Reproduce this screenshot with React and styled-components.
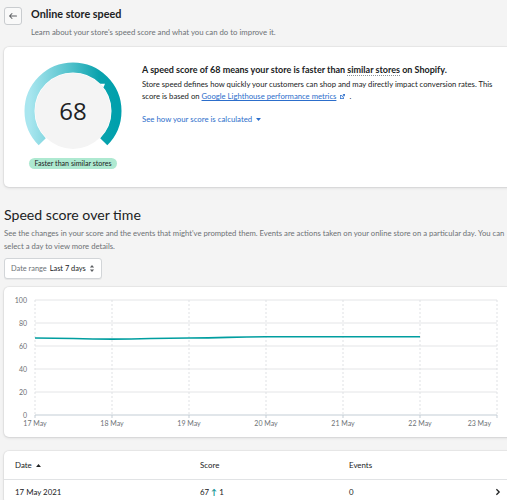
import React from "react";
import styled, { createGlobalStyle } from "styled-components";

const GlobalStyle = createGlobalStyle`
  html, body {
    margin: 0;
    padding: 0;
    background: #f4f4f4;
    overflow: hidden;
  }
  body {
    font-family: Lato, "Open Sans", sans-serif;
    color: #202223;
  }
`;

const Page = styled.div`
  width: 520px;
  padding: 7px 0 0 4px;
`;

const Header = styled.div`
  display: flex;
  align-items: flex-start;
  gap: 9px;
`;

const BackButton = styled.button`
  width: 18px;
  height: 18px;
  padding: 0;
  border: 1px solid #c9cccf;
  border-radius: 3px;
  background: #f9f9f9;
  display: flex;
  align-items: center;
  justify-content: center;
  color: #5c5f62;
  cursor: pointer;
`;

const Title = styled.h1`
  margin: 0;
  font-size: 10.8px;
  line-height: 14px;
  font-weight: 700;
`;

const Subtitle = styled.p`
  margin: 5px 0 0;
  font-size: 7.8px;
  line-height: 12px;
  color: #6d7175;
`;

const Card = styled.div`
  background: #fff;
  border-radius: 5px;
  box-shadow: 0 0 0 1px rgba(63, 63, 68, 0.05), 0 1px 3px rgba(63, 63, 68, 0.15);
  margin-top: ${(p) => p.$mt || 0}px;
`;

const ScoreCard = styled(Card)`
  display: flex;
  gap: 19px;
  padding: 14px 0 18px 19px;
`;

const GaugeColumn = styled.div`
  display: flex;
  flex-direction: column;
  align-items: center;
  width: 100px;
`;

const Badge = styled.span`
  margin-top: 2px;
  background: #aee9d1;
  border-radius: 10px;
  padding: 0 5px;
  font-size: 7.1px;
  line-height: 11px;
  white-space: nowrap;
`;

const ScoreText = styled.div`
  margin-top: 3px;
  width: 362px;
`;

const ScoreHeading = styled.p`
  margin: 0;
  font-size: 9px;
  line-height: 12px;
  font-weight: 700;
`;

const Dotted = styled.span`
  border-bottom: 1px dotted #8c9196;
`;

const Body = styled.p`
  margin: 2px 0 0;
  font-size: 7.7px;
  line-height: 12px;
  color: #202223;
`;

const Link = styled.a`
  color: #2c6ecb;
  text-decoration: underline;
`;

const ExternalIcon = styled.svg`
  margin: 0 3px 0 3px;
  vertical-align: -1px;
`;

const Disclosure = styled.div`
  margin-top: 11px;
  font-size: 7.8px;
  line-height: 12px;
  color: #2c6ecb;
  display: flex;
  align-items: center;
  gap: 3px;
`;

const SectionTitle = styled.h2`
  margin: 18px 0 0;
  font-size: 14.1px;
  line-height: 20px;
  font-weight: 400;
`;

const SectionText = styled.p`
  margin: 2px 0 0;
  font-size: 7.7px;
  line-height: 13px;
  color: #6d7175;
  width: 503px;
`;

const SelectButton = styled.button`
  margin-top: 5px;
  height: 21px;
  padding: 0 6px;
  display: flex;
  align-items: center;
  gap: 3px;
  background: #fff;
  border: 1px solid #d2d5d8;
  border-radius: 3px;
  box-shadow: 0 1px 0 rgba(0, 0, 0, 0.05);
  font-family: inherit;
  font-size: 7.4px;
  color: #202223;
  white-space: nowrap;
`;

const Muted = styled.span`
  color: #6d7175;
`;

const ChartCard = styled(Card)`
  height: 150px;
`;

const TableRow = styled.div`
  display: grid;
  grid-template-columns: 185px 149px 1fr 30px;
  align-items: center;
  height: ${(p) => p.$h}px;
  padding-left: 11px;
  font-size: 7.9px;
  border-top: ${(p) => (p.$divider ? "1px solid #e1e3e5" : "none")};
`;

const SortLabel = styled.span`
  display: flex;
  align-items: center;
  gap: 3px;
`;

const Up = styled.span`
  color: #008c8c;
  font-weight: 700;
`;

function Gauge({ score }) {
  const cx = 50;
  const cy = 50;
  const r = 43.5;
  const pt = (deg, rad) => {
    const a = ((deg - 90) * Math.PI) / 180;
    return [cx + rad * Math.cos(a), cy + rad * Math.sin(a)];
  };
  const [sx, sy] = pt(225, r);
  const [ex, ey] = pt(135, r);
  const tip = 225 + (score / 100) * 270;
  const [b1x, b1y] = pt(tip - 4, 38.2);
  const [b2x, b2y] = pt(tip + 4, 38.2);
  const [tx, ty] = pt(tip + 1, 42);
  return (
    <svg width="100" height="95" viewBox="0 0 100 95">
      <defs>
        <linearGradient id="ring" x1="0" y1="0" x2="1" y2="0">
          <stop offset="0" stopColor="#a9e6ef" />
          <stop offset="0.45" stopColor="#55c3cd" />
          <stop offset="0.8" stopColor="#0aa2ad" />
          <stop offset="1" stopColor="#00a0ac" />
        </linearGradient>
      </defs>
      <path
        d={`M ${sx} ${sy} A ${r} ${r} 0 1 1 ${ex} ${ey}`}
        fill="none"
        stroke="url(#ring)"
        strokeWidth="10"
      />
      <circle cx={cx} cy={cy} r="38" fill="#f4f4f4" />
      <path d={`M ${b1x} ${b1y} L ${tx} ${ty} L ${b2x} ${b2y} Z`} fill="#ffffff" />
      <text
        x={cx}
        y={cy + 8.5}
        textAnchor="middle"
        fontSize="24"
        fontFamily="Open Sans, sans-serif"
        fill="#202223"
      >
        {score}
      </text>
    </svg>
  );
}

const days = ["17 May", "18 May", "19 May", "20 May", "21 May", "22 May", "23 May"];
const scores = [67, 66, 67, 68, 68, 68];

function Chart() {
  const left = 31;
  const step = 77;
  const top = 13;
  const bottom = 128;
  const yFor = (v) => bottom - (v / 100) * (bottom - top);
  const pts = scores.map((s, i) => [left + i * step, yFor(s)]);
  let d = `M ${pts[0][0]} ${pts[0][1]}`;
  for (let i = 1; i < pts.length; i++) {
    const [x0, y0] = pts[i - 1];
    const [x1, y1] = pts[i];
    const mx = (x0 + x1) / 2;
    d += ` C ${mx} ${y0} ${mx} ${y1} ${x1} ${y1}`;
  }
  return (
    <svg width="510" height="150" viewBox="0 0 510 150" fontFamily="Lato, sans-serif">
      {[0, 20, 40, 60, 80, 100].map((v) => (
        <g key={v}>
          {v > 0 && (
            <line x1={left} x2={left + 6 * step} y1={yFor(v)} y2={yFor(v)} stroke="#e4e5e7" strokeWidth="1" />
          )}
          <text x="23" y={yFor(v) + 2.5} textAnchor="end" fontSize="7" fill="#6d7175">
            {v}
          </text>
        </g>
      ))}
      {days.map((dname, i) => {
        const x = left + i * step;
        const last = i === days.length - 1;
        return (
          <g key={dname}>
            <line x1={x} x2={x} y1={top} y2={bottom} stroke="#dfe1e4" strokeDasharray="2 2" />
            <line x1={x} x2={x} y1={bottom} y2={bottom + 3} stroke="#c4cdd5" />
            <text x={last ? x - 6 : x} y="139" textAnchor={last ? "end" : "middle"} fontSize="7" fill="#6d7175">
              {dname}
            </text>
          </g>
        );
      })}
      <line x1={left} x2={left + 6 * step} y1={bottom} y2={bottom} stroke="#c4cdd5" strokeWidth="1.2" />
      <path d={d} fill="none" stroke="#009ea0" strokeWidth="1.6" />
    </svg>
  );
}

export default function App() {
  return (
    <>
      <GlobalStyle />
      <Page>
        <Header>
          <BackButton aria-label="Back">
            <svg width="10" height="10" viewBox="0 0 20 20">
              <path d="M17 9H5.414l3.293-3.293a1 1 0 1 0-1.414-1.414l-5 5a1 1 0 0 0 0 1.414l5 5a1 1 0 0 0 1.414-1.414L5.414 11H17a1 1 0 1 0 0-2z" fill="currentColor" />
            </svg>
          </BackButton>
          <div>
            <Title>Online store speed</Title>
            <Subtitle>Learn about your store's speed score and what you can do to improve it.</Subtitle>
          </div>
        </Header>

        <ScoreCard as="section" $mt={9}>
          <GaugeColumn>
            <Gauge score={68} />
            <Badge>Faster than similar stores</Badge>
          </GaugeColumn>
          <ScoreText>
            <ScoreHeading>
              A speed score of 68 means your store is faster than <Dotted>similar stores</Dotted> on Shopify.
            </ScoreHeading>
            <Body>
              Store speed defines how quickly your customers can shop and may directly impact conversion rates. This
              score is based on <Link href="#">Google Lighthouse performance metrics</Link>
              <ExternalIcon width="7" height="7" viewBox="0 0 20 20">
                <path d="M11 3h6v6h-2V6.4l-6.3 6.3-1.4-1.4L13.6 5H11V3zM3 6h6v2H5v7h7v-4h2v6H3V6z" fill="#2c6ecb" />
              </ExternalIcon>
              .
            </Body>
            <Disclosure>
              See how your score is calculated
              <svg width="7" height="7" viewBox="0 0 10 10">
                <path d="M1.5 3h7L5 7z" fill="#2c6ecb" />
              </svg>
            </Disclosure>
          </ScoreText>
        </ScoreCard>

        <SectionTitle>Speed score over time</SectionTitle>
        <SectionText>
          See the changes in your score and the events that might've prompted them. Events are actions taken on your
          online store on a particular day. You can select a day to view more details.
        </SectionText>
        <SelectButton>
          <Muted>Date range</Muted> Last 7 days
          <svg width="6" height="9" viewBox="0 0 10 14">
            <path d="M5 1l3.5 4.5h-7zM5 13L1.5 8.5h7z" fill="#5c5f62" />
          </svg>
        </SelectButton>

        <ChartCard $mt={8}>
          <Chart />
        </ChartCard>

        <Card $mt={14}>
          <TableRow $h={28}>
            <SortLabel>
              Date
              <svg width="7" height="7" viewBox="0 0 10 10">
                <path d="M1.5 7h7L5 3z" fill="#202223" />
              </svg>
            </SortLabel>
            <span>Score</span>
            <span>Events</span>
            <span />
          </TableRow>
          <TableRow $h={24} $divider>
            <span>17 May 2021</span>
            <span>
              67 <Up>↑</Up> 1
            </span>
            <span>0</span>
            <svg width="8" height="8" viewBox="0 0 10 10">
              <path d="M3 1.5L6.5 5 3 8.5" fill="none" stroke="#202223" strokeWidth="1.6" />
            </svg>
          </TableRow>
        </Card>
      </Page>
    </>
  );
}
